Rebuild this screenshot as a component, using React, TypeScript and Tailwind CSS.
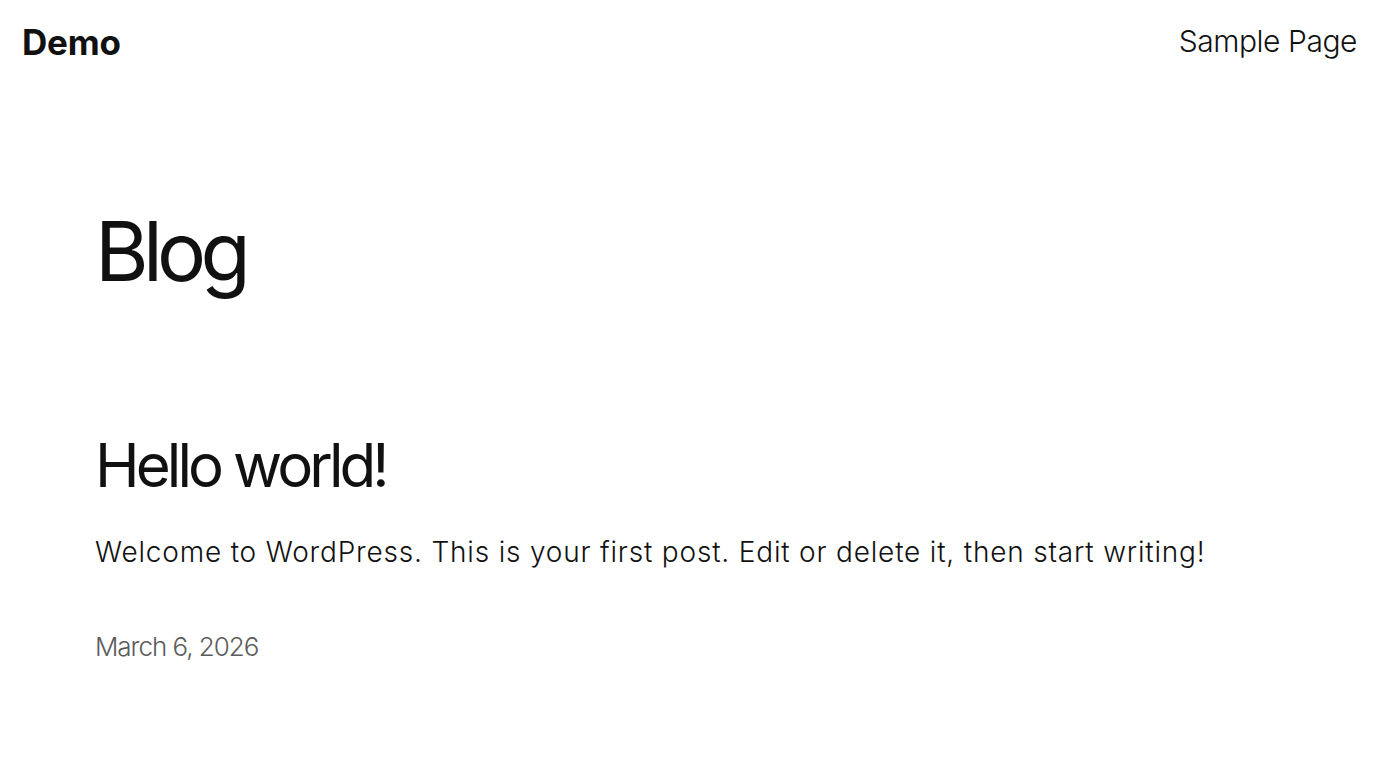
export default function App() {
  return (
    <div
      className="min-h-screen bg-white text-[#111111]"
      style={{ fontFamily: "Inter, 'Noto Sans', sans-serif" }}
    >
      {/* Header */}
      <header className="flex h-[84px] items-center justify-between pl-[22px] pr-[43px]">
        <a className="text-[35px] font-bold tracking-[-0.005em] leading-none">Demo</a>
        <nav>
          <a className="text-[30px] font-light tracking-[-0.015em] leading-none">Sample Page</a>
        </nav>
      </header>

      <main className="px-[95px]">
        <h1 className="mt-[127px] text-[82px] font-normal leading-none tracking-[-0.07em]">Blog</h1>

        <article className="mt-[142px]">
          <h2 className="text-[60px] font-normal leading-none tracking-[-0.065em]">Hello world!</h2>
          <p className="mt-[43px] text-[28px] font-light leading-none tracking-[0.029em]">
            Welcome to WordPress. This is your first post. Edit or delete it, then start writing!
          </p>
          <div className="mt-[68px] text-[26px] font-light leading-none tracking-[-0.04em] text-[#5b5b5b]">
            March 6, 2026
          </div>
        </article>
      </main>
    </div>
  );
}
